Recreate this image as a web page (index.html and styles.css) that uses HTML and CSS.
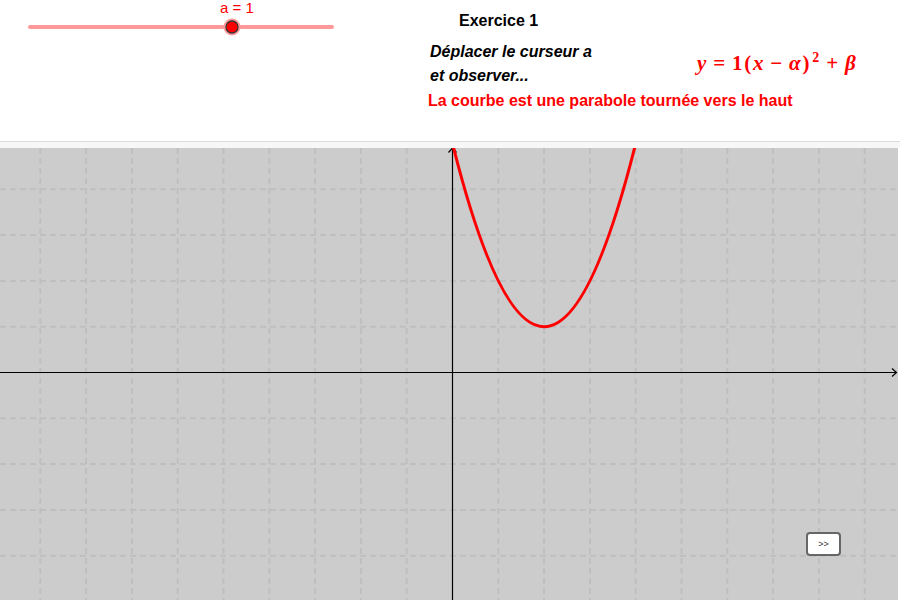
FILE: index.html
```html
<!DOCTYPE html>
<html lang="fr">
<head>
<meta charset="utf-8">
<title>Exercice 1</title>
<link rel="stylesheet" href="styles.css">
</head>
<body>
<div class="app">
  <div class="top">
    <div class="slider">
      <svg width="340" height="40" viewBox="0 0 340 40">
        <text x="220" y="13" class="slider-label">a = 1</text>
        <line x1="30" y1="27" x2="332" y2="27" stroke="#ff9999" stroke-width="4" stroke-linecap="round"/>
        <circle cx="232" cy="27" r="8.5" fill="#ff9999"/>
        <circle cx="232" cy="27" r="6" fill="#ff0000" stroke="#333" stroke-width="1.3"/>
      </svg>
    </div>
    <div class="panel">
      <div class="title">Exercice 1</div>
      <div class="row">
        <div class="instr">Déplacer le curseur a<br>et observer...</div>
        <div class="formula"><i>y</i><span class="op">=</span>1(<i>x</i><span class="op">−</span><i>α</i>)<sup>2</sup><span class="op">+</span><i>β</i></div>
      </div>
      <div class="result">La courbe est une parabole tournée vers le haut</div>
    </div>
  </div>
  <div class="band"></div>
  <div class="graph">
    <svg width="898" height="452" viewBox="0 0 898 452">
      <rect width="898" height="452" fill="#cccccc"/>
      <g stroke="#bfbfbf" stroke-width="2" stroke-dasharray="6 4">
        <line x1="40.3" y1="0" x2="40.3" y2="452"/>
        <line x1="86.1" y1="0" x2="86.1" y2="452"/>
        <line x1="131.9" y1="0" x2="131.9" y2="452"/>
        <line x1="177.7" y1="0" x2="177.7" y2="452"/>
        <line x1="223.5" y1="0" x2="223.5" y2="452"/>
        <line x1="269.3" y1="0" x2="269.3" y2="452"/>
        <line x1="315.1" y1="0" x2="315.1" y2="452"/>
        <line x1="360.9" y1="0" x2="360.9" y2="452"/>
        <line x1="406.7" y1="0" x2="406.7" y2="452"/>
        <line x1="498.3" y1="0" x2="498.3" y2="452"/>
        <line x1="544.1" y1="0" x2="544.1" y2="452"/>
        <line x1="589.9" y1="0" x2="589.9" y2="452"/>
        <line x1="635.7" y1="0" x2="635.7" y2="452"/>
        <line x1="681.5" y1="0" x2="681.5" y2="452"/>
        <line x1="727.3" y1="0" x2="727.3" y2="452"/>
        <line x1="773.1" y1="0" x2="773.1" y2="452"/>
        <line x1="818.9" y1="0" x2="818.9" y2="452"/>
        <line x1="864.7" y1="0" x2="864.7" y2="452"/>
        <line x1="0" y1="41.3" x2="898" y2="41.3"/>
        <line x1="0" y1="87.1" x2="898" y2="87.1"/>
        <line x1="0" y1="132.9" x2="898" y2="132.9"/>
        <line x1="0" y1="178.7" x2="898" y2="178.7"/>
        <line x1="0" y1="270.3" x2="898" y2="270.3"/>
        <line x1="0" y1="316.1" x2="898" y2="316.1"/>
        <line x1="0" y1="361.9" x2="898" y2="361.9"/>
        <line x1="0" y1="407.7" x2="898" y2="407.7"/>
      </g>
      <g stroke="#000" stroke-width="1.2" fill="none">
        <line x1="0" y1="224.5" x2="896" y2="224.5"/>
        <polyline points="892,220.5 896.5,224.5 892,228.5"/>
        <line x1="452.5" y1="0.5" x2="452.5" y2="452"/>
        <polyline points="448.5,4.5 452.5,0 456.5,4.5"/>
      </g>
      <path d="M452.5,-4.5 Q544.1,361.9 635.7,-4.5" fill="none" stroke="#ff0000" stroke-width="3"/>
    </svg>
    <button class="next">&gt;&gt;</button>
  </div>
</div>
</body>
</html>
```
FILE: styles.css
```css
html, body {
  margin: 0;
  padding: 0;
  background: #ffffff;
}
body {
  font-family: "Liberation Sans", Arial, sans-serif;
}
.app {
  width: 900px;
  height: 600px;
  overflow: hidden;
}
.top {
  height: 141px;
  border-bottom: 1px solid #dcdcdc;
  display: flex;
  align-items: flex-start;
}
.slider {
  width: 340px;
  flex: none;
}
.slider svg {
  display: block;
}
.slider-label {
  font-family: "Liberation Sans", Arial, sans-serif;
  font-size: 15px;
  fill: #ff0000;
}
.panel {
  margin-left: 88px;
  padding-top: 10px;
  flex: 1;
}
.title {
  font-weight: bold;
  font-size: 16px;
  line-height: 21px;
  margin-left: 31px;
  color: #000;
}
.row {
  display: flex;
  align-items: flex-start;
  margin-top: 8.5px;
}
.instr {
  width: 267px;
  margin-left: 2px;
  font-weight: bold;
  font-style: italic;
  font-size: 16px;
  line-height: 24px;
  color: #000;
}
.formula {
  margin-top: 11px;
  font-family: "Liberation Serif", "Times New Roman", serif;
  font-weight: bold;
  font-size: 21px;
  line-height: 24px;
  letter-spacing: 1.8px;
  color: #ff0000;
  white-space: nowrap;
}
.formula i {
  font-style: italic;
}
.formula .op {
  padding: 0 5px;
}
.formula sup {
  font-size: 14px;
  line-height: 0;
  vertical-align: 8px;
  padding-left: 1px;
}
.result {
  margin-top: 1px;
  font-weight: bold;
  font-size: 16px;
  line-height: 24px;
  color: #ff0000;
}
.band {
  height: 6px;
  background: #f7f7f7;
}
.graph {
  position: relative;
  width: 898px;
  height: 452px;
}
.graph svg {
  display: block;
}
.next {
  position: absolute;
  left: 806px;
  top: 384px;
  width: 35px;
  height: 24px;
  box-sizing: border-box;
  border: 2px solid #666;
  border-radius: 4px;
  background: #fff;
  color: #333;
  font-family: "Liberation Sans", Arial, sans-serif;
  font-size: 9px;
  padding: 0;
  line-height: 20px;
}
```
